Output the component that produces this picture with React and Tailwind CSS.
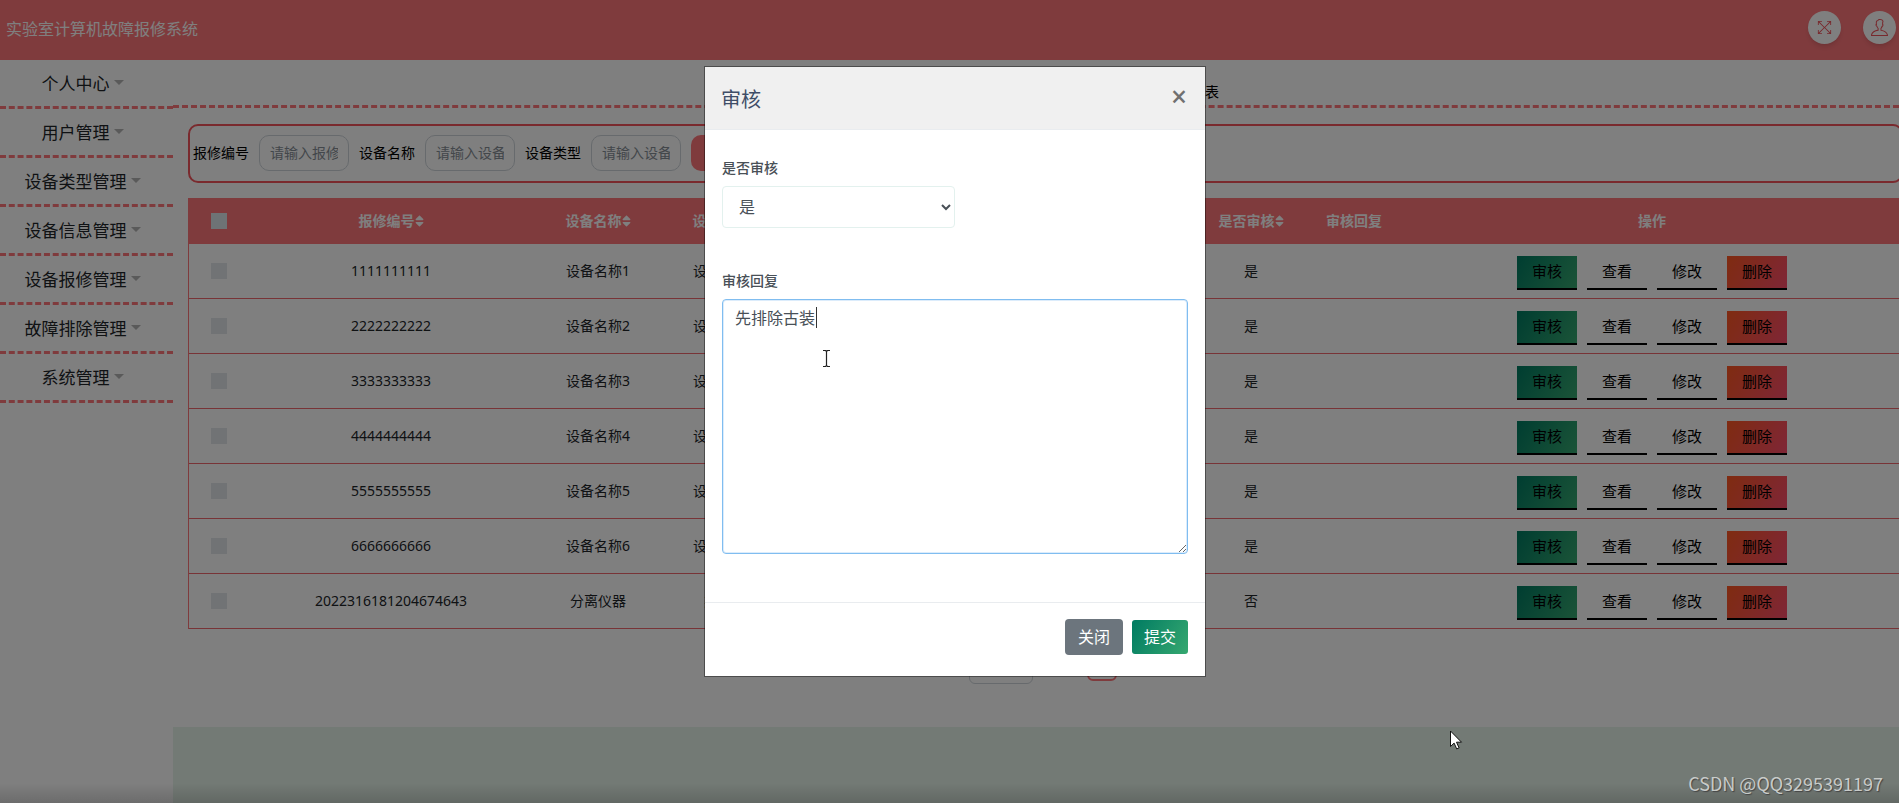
import { FaSort } from "react-icons/fa";
import { TfiFullscreen, TfiUser } from "react-icons/tfi";

const menus = [
  "个人中心",
  "用户管理",
  "设备类型管理",
  "设备信息管理",
  "设备报修管理",
  "故障排除管理",
  "系统管理",
];

const searchFields = [
  { id: "bianhao", label: "报修编号", placeholder: "请输入报修编号" },
  { id: "mingcheng", label: "设备名称", placeholder: "请输入设备名称" },
  { id: "leixing", label: "设备类型", placeholder: "请输入设备类型" },
];

const columns = [
  { title: "报修编号", sort: true },
  { title: "设备名称", sort: true },
  { title: "设备类型", sort: true },
  { title: "报修时间", sort: true },
  { title: "用户名", sort: true },
  { title: "联系电话", sort: true },
  { title: "是否审核", sort: true },
  { title: "审核回复", sort: false },
  { title: "操作", sort: false },
];

const rows = [
  { no: "1111111111", name: "设备名称1", type: "设备类型1", state: "是" },
  { no: "2222222222", name: "设备名称2", type: "设备类型2", state: "是" },
  { no: "3333333333", name: "设备名称3", type: "设备类型3", state: "是" },
  { no: "4444444444", name: "设备名称4", type: "设备类型4", state: "是" },
  { no: "5555555555", name: "设备名称5", type: "设备类型5", state: "是" },
  { no: "6666666666", name: "设备名称6", type: "设备类型6", state: "是" },
  { no: "2022316181204674643", name: "分离仪器", type: "类型一", state: "否" },
];

const actions = [
  { name: "审核", style: "bg-[linear-gradient(120deg,#007b62,#36a870)]" },
  { name: "查看", style: "" },
  { name: "修改", style: "" },
  { name: "删除", style: "bg-[linear-gradient(120deg,#ff5722,#ff4d6d)]" },
];

function Header() {
  return (
    <header className="flex h-[60px] items-center justify-between bg-[#ff777b] pr-[3px] pl-[6px] text-white">
      <h1 className="pb-[2px] text-base">实验室计算机故障报修系统</h1>
      <div className="flex gap-[22px] pb-[6px]">
        <button
          aria-label="全屏"
          className="flex size-[33px] items-center justify-center rounded-full bg-white text-[#f0525a] shadow-md"
        >
          <TfiFullscreen size={15} />
        </button>
        <button
          aria-label="用户"
          className="flex size-[33px] items-center justify-center rounded-full bg-white text-[#f0525a] shadow-md"
        >
          <TfiUser size={17} />
        </button>
      </div>
    </header>
  );
}

function Sidebar() {
  return (
    <nav className="w-[173px] shrink-0 bg-white">
      {menus.map((item) => (
        <a
          key={item}
          href="#"
          className="flex h-[49px] items-center justify-center gap-1 border-b-3 border-dashed border-[#ff777b] pt-[2px] pr-2 text-[17px] text-[#212529]"
        >
          {item}
          <span className="mb-1 border-x-5 border-t-5 border-x-transparent border-t-[#b4b4b4]" />
        </a>
      ))}
    </nav>
  );
}

function SearchBar() {
  return (
    <form className="mt-4 flex h-[59px] items-center gap-[10px] rounded-[10px] border-2 border-[#f5545c] pb-[2px] pl-[3px] text-sm">
      {searchFields.map((f) => (
        <div key={f.id} className="flex items-center gap-[10px]">
          <label htmlFor={f.id} className="text-black">
            {f.label}
          </label>
          <input
            id={f.id}
            placeholder={f.placeholder}
            className="h-9 w-[90px] rounded-[10px] border border-[#ced4da] px-[10px] placeholder:text-[#868e96]"
          />
        </div>
      ))}
      <button type="button" className="h-9 w-[70px] rounded-[10px] bg-[#ff777b] text-white">
        查询
      </button>
    </form>
  );
}

function RepairTable() {
  return (
    <table className="mt-[15px] w-full table-fixed border-separate border-spacing-0 border-l border-[#ff777b] text-center text-sm text-[#212529]">
      <colgroup>
        <col className="w-[61px]" />
        <col className="w-[282px]" />
        <col className="w-[132px]" />
        <col className="w-[122px]" />
        <col className="w-[137px]" />
        <col className="w-[136px]" />
        <col className="w-[136px]" />
        <col className="w-[112px]" />
        <col className="w-[94px]" />
        <col />
      </colgroup>
      <thead>
        <tr className="h-[46px] bg-[#ff777b] text-white">
          <th>
            <input
              type="checkbox"
              aria-label="全选"
              className="ml-[22px] block size-4 appearance-none bg-[#dde6ea]"
            />
          </th>
          {columns.map((c) => (
            <th key={c.title} className="font-bold">
              <span className="inline-flex items-center">
                {c.title}
                {c.sort && <FaSort className="h-[14px] w-[9px]" />}
              </span>
            </th>
          ))}
        </tr>
      </thead>
      <tbody>
        {rows.map((r) => (
          <tr key={r.no} className="h-[55px] *:border-b *:border-[#f0686e]">
            <td>
              <input
                type="checkbox"
                aria-label={r.no}
                className="ml-[22px] block size-4 appearance-none bg-[#e2e6ea]"
              />
            </td>
            <td>{r.no}</td>
            <td>{r.name}</td>
            <td>{r.type}</td>
            <td />
            <td />
            <td />
            <td>{r.state}</td>
            <td />
            <td>
              <div className="flex justify-center gap-[10px] pt-[3px]">
                {actions.map((a) => (
                  <button
                    key={a.name}
                    className={`h-[34px] w-[60px] border-b-2 border-black text-[15px] text-black ${a.style}`}
                  >
                    {a.name}
                  </button>
                ))}
              </div>
            </td>
          </tr>
        ))}
      </tbody>
    </table>
  );
}

function Pager() {
  return (
    <div className="mt-[17px] flex items-center justify-center pb-[43px] text-sm">
      <label htmlFor="size" className="w-[60px]">
        每页
      </label>
      <select id="size" className="h-[38px] w-16 rounded-md border border-[#ced4da] px-2">
        <option>10</option>
      </select>
      <span className="w-[54px] text-center">条</span>
      <button className="h-8 w-[30px] rounded-md border-2 border-[#ff777b]">1</button>
      <span className="w-[66px] text-center">下一页</span>
    </div>
  );
}

function ReviewDialog() {
  return (
    <div
      role="dialog"
      aria-labelledby="review-title"
      className="w-[502px] border border-black/40 bg-white bg-clip-padding text-[#495057]"
    >
      <div className="flex h-[63px] items-center justify-between border-b border-[#e9ecef] bg-[#f0f0f0] pr-[18px] pl-4">
        <h2 id="review-title" className="pt-[3px] text-xl text-[#3f4d67]">
          审核
        </h2>
        <button aria-label="关闭" className="pb-1 text-[28px] leading-9 font-medium text-[#707070]">
          ×
        </button>
      </div>

      <div className="px-[17px] pt-7 pb-12">
        <label htmlFor="sfsh" className="block text-sm font-medium">
          是否审核
        </label>
        <select
          id="sfsh"
          className="mt-2 h-[42px] w-[233px] rounded border border-[#e3f1ee] bg-white px-3 text-base"
        >
          <option>是</option>
          <option>否</option>
        </select>

        <label htmlFor="shhf" className="mt-[43px] block text-sm font-medium">
          审核回复
        </label>
        <div className="relative mt-2">
          <textarea
            id="shhf"
            defaultValue="先排除古装"
            className="block h-[255px] w-full rounded border border-[#80bdf0] px-3 py-[6px] text-base shadow-[inset_0_0_0_1px_#dcecfb] outline-none"
          />
          <span className="absolute top-2 left-[94px] h-[21px] w-px bg-[#333]" />
          {/* text cursor */}
          <svg className="absolute top-[51px] left-[100px]" width="9" height="17" viewBox="0 0 9 17">
            <path
              d="M1 .5h2.5l1 1 1-1H8M4.500 1.500v14M1 16.500h2.500l1-1 1 1H8"
              fill="none"
              stroke="#222"
              strokeWidth="1.2"
            />
          </svg>
        </div>
      </div>

      <div className="flex items-center justify-end gap-[9px] border-t border-[#e9ecef] px-[17px] pt-4 pb-[21px]">
        <button className="h-9 w-[58px] rounded bg-[#6c757d] text-base text-white">关闭</button>
        <button className="h-[34px] w-14 rounded-[3px] bg-[linear-gradient(120deg,#007b62,#36a870)] text-base text-white">
          提交
        </button>
      </div>
    </div>
  );
}

export default function App() {
  return (
    <div className="relative flex min-h-screen flex-col overflow-hidden bg-[#e6f4ea] font-['Noto_Sans','Noto_Sans_CJK_SC',sans-serif]">
      <Header />
      <div className="flex grow">
        <Sidebar />
        <main className="min-w-0 grow">
          <div className="bg-white">
            <div className="flex h-12 items-center justify-center border-b-3 border-dashed border-[#ff777b] text-sm text-black">
              <div className="flex w-[366px] justify-between pt-[18px]">
                <span>首页</span>
                <span>设备报修</span>
                <span>列表</span>
              </div>
            </div>
            <div className="-mr-1 pl-[15px]">
              <SearchBar />
              <RepairTable />
              <Pager />
            </div>
          </div>
        </main>
      </div>

      {/* MODAL */}
      <div className="absolute inset-0 flex items-start justify-center bg-black/50 pt-[66px] pl-[11px]">
        <ReviewDialog />
      </div>

      <div className="absolute inset-x-0 bottom-0 h-5 bg-linear-to-b from-transparent to-black/15" />

      {/* mouse pointer */}
      <svg className="absolute top-[730px] left-[1450px]" width="13" height="20" viewBox="0 0 13 20">
        <path
          d="M.5 1v15.500l3.600-3.400 2.600 5.800 2.400-1-2.600-5.700h5z"
          fill="#fff"
          stroke="#111"
          strokeWidth="1"
        />
      </svg>

      <p className="absolute right-4 bottom-[6px] font-['Noto_Sans_CJK_SC',sans-serif] text-lg text-[#c8cbc9] [text-shadow:1px_1px_1px_#444]">
        CSDN @QQ3295391197
      </p>
    </div>
  );
}
